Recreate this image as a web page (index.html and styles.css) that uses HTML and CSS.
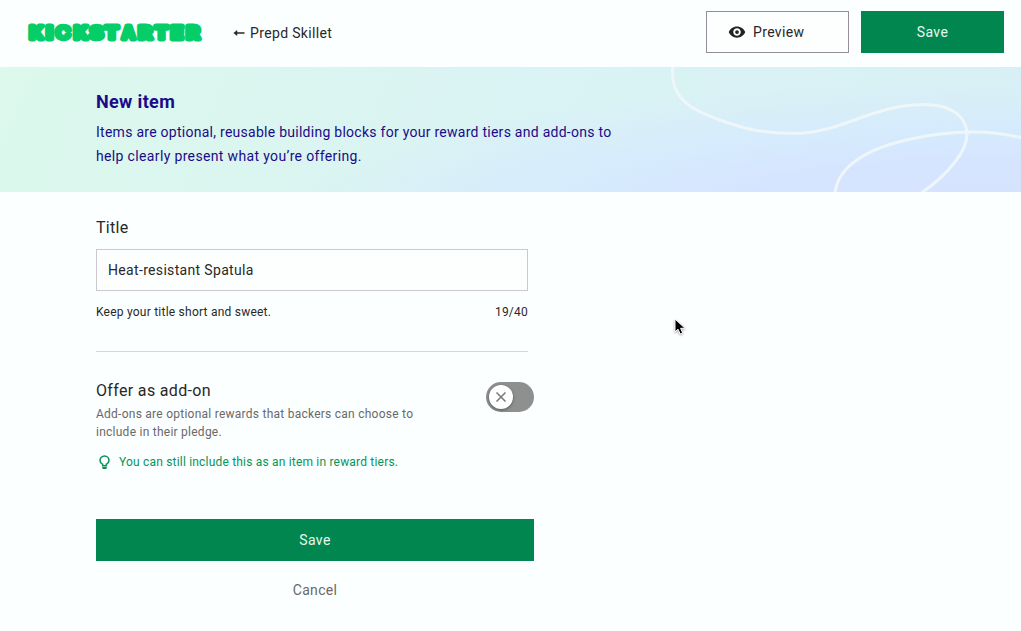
FILE: index.html
```html
<!DOCTYPE html>
<html lang="en">
<head>
<meta charset="utf-8">
<title>New item</title>
<link rel="stylesheet" href="styles.css">
</head>
<body>
<header class="header">
  <svg class="logo" viewBox="0 0 176 20" role="img" aria-label="Kickstarter">
    <g class="logo-letters">
      <text x="2.500" y="16.500" textLength="13.500" lengthAdjust="spacingAndGlyphs">K</text>
      <text x="19.500" y="16.500" textLength="6" lengthAdjust="spacingAndGlyphs">I</text>
      <text class="logo-open" x="28.500" y="16.500" textLength="15" lengthAdjust="spacingAndGlyphs">C</text>
      <text x="47" y="16.500" textLength="13.500" lengthAdjust="spacingAndGlyphs">K</text>
      <text class="logo-open" x="62.500" y="16.500" textLength="14" lengthAdjust="spacingAndGlyphs">S</text>
      <text x="78" y="16.500" textLength="13.500" lengthAdjust="spacingAndGlyphs">T</text>
      <text x="95" y="16.500" textLength="13" lengthAdjust="spacingAndGlyphs">A</text>
      <text x="111.500" y="16.500" textLength="13.500" lengthAdjust="spacingAndGlyphs">R</text>
      <text x="128" y="16.500" textLength="13" lengthAdjust="spacingAndGlyphs">T</text>
      <text x="144" y="16.500" textLength="12" lengthAdjust="spacingAndGlyphs">E</text>
      <text x="159.500" y="16.500" textLength="13" lengthAdjust="spacingAndGlyphs">R</text>
    </g>
  </svg>
  <a class="back">
    <svg class="back-arrow" viewBox="0 0 12 8"><path d="M11.500 4H2" /><path class="arrow-head" d="M4 1.600v4.800L.8 4z"/></svg>
    <span>Prepd Skillet</span>
  </a>
  <div class="actions">
    <button class="button button-outline">
      <svg class="eye" viewBox="0 0 24 24"><path d="M12 4.500C7 4.500 2.730 7.610 1 12c1.730 4.390 6 7.500 11 7.500s9.270-3.110 11-7.500c-1.730-4.390-6-7.500-11-7.500zM12 17c-2.760 0-5-2.240-5-5s2.240-5 5-5 5 2.240 5 5-2.240 5-5 5zm0-7.500a2.500 2.500 0 1 0 0 5 2.500 2.500 0 0 0 0-5z"/></svg>
      <span>Preview</span>
    </button>
    <button class="button button-solid">Save</button>
  </div>
</header>

<section class="banner">
  <div class="banner-copy">
    <h1 class="banner-title">New item</h1>
    <p class="banner-text">Items are optional, reusable building blocks for your reward tiers and add-ons to<br><span class="banner-line">help clearly present what you’re offering.</span></p>
  </div>
  <svg class="squiggle" viewBox="0 0 381 125">
    <path d="M33 -2C31 14 34 27 50 39C65 49 84 55 105 61C125 66 144 67 164 66C200 63 225 45 261 39.500C293 34.500 312 39 322 52C331 65 327 80 315 95C305 108 296 116 280 127"/>
    <path d="M195 127C196 112 206 99 223 89C243 77 270 71 300 67C328 63.500 350 64 383 71"/>
  </svg>
</section>

<main class="form">
  <label class="label" for="title">Title</label>
  <input class="input" id="title" type="text" value="Heat-resistant Spatula">
  <div class="hint-row"><span>Keep your title short and sweet.</span><span>19/40</span></div>
  <div class="divider"></div>
  <div class="addon">
    <div>
      <h2 class="addon-title">Offer as add-on</h2>
      <p class="addon-text">Add-ons are optional rewards that backers can choose to<br>include in their pledge.</p>
    </div>
    <div class="toggle" role="switch" aria-checked="false">
      <span class="knob"><svg class="cross" viewBox="0 0 10 10"><path d="M.5.5l9 9M9.500.5l-9 9"/></svg></span>
    </div>
  </div>
  <p class="tip">
    <svg class="bulb" viewBox="0 0 12 16"><path class="bulb-glass" d="M4 11.500V10C2 8.900 1.100 7.600 1.100 5.800a4.900 4.900 0 0 1 9.800 0C10.900 7.600 10 8.900 8 10v1.500z"/><path class="bulb-base" d="M3.500 13h5v.7c0 .8-.7 1.500-1.500 1.500H5c-.8 0-1.500-.7-1.500-1.500z"/></svg>
    <span>You can still include this as an item in reward tiers.</span>
  </p>
  <button class="button button-solid button-wide">Save</button>
  <a class="cancel">Cancel</a>
</main>

<svg class="pointer" viewBox="0 0 12 18"><path d="M1 1v13l3-2.800 2.200 4.800 2.500-1.100L6.600 10.300H11z"/></svg>
</body>
</html>
```
FILE: styles.css
```css
* { box-sizing: border-box; }

body {
  margin: 0;
  height: 631px;
  overflow: hidden;
  background: #fcffff;
  color: #282828;
  font-family: Roboto, "Liberation Sans", sans-serif;
  font-size: 14px;
}

h1, h2, p { margin: 0; font-weight: 400; }

.header {
  display: flex;
  align-items: center;
  height: 67px;
  padding: 0 17px 3px 27px;
}

.logo { width: 176px; height: 20px; overflow: visible; }

.logo-letters {
  font-family: Inter, sans-serif;
  font-size: 17.500px;
  font-weight: 700;
  fill: #05ce68;
  stroke: #05ce68;
  stroke-width: 5px;
  stroke-linejoin: round;
}

.logo-open { font-weight: 600; stroke-width: 4.400px; }

.back {
  display: flex;
  align-items: center;
  gap: 5px;
  margin: 2px 0 0 30px;
  letter-spacing: .35px;
}

.back-arrow { width: 12px; height: 8px; fill: none; stroke: #282828; stroke-width: 1.500px; }
.arrow-head { fill: #282828; stroke-width: .6px; }

.actions { display: flex; gap: 12px; margin-left: auto; }

.button {
  display: flex;
  align-items: center;
  justify-content: center;
  width: 143px;
  height: 42px;
  padding: 0;
  border: 0;
  font: inherit;
  letter-spacing: .35px;
}

.button-outline {
  justify-content: flex-start;
  gap: 7px;
  padding-left: 21px;
  border: 1px solid #949098;
  background: #fdffff;
  color: #282828;
}

.button-solid { background: #028650; color: #e6f8ef; }

.eye { width: 18px; height: 18px; fill: #222; }

.banner {
  display: flex;
  justify-content: space-between;
  height: 125px;
  padding-left: 96px;
  background:
    radial-gradient(ellipse 700px 130px at 990px 145px, #d5e3ff 0%, #d5e4ff 36%, #d5e9ffcc 62%, #d5e9ff00 100%),
    linear-gradient(110deg, #dcf9ec 0%, #dbf6ef 22%, #daf3f4 48%, #d8f0f5 100%);
  color: #1b0b88;
}

.banner-title { margin-top: 24px; font-size: 18px; line-height: 22px; font-weight: 700; letter-spacing: .35px; }
.banner-text { margin-top: 7px; line-height: 24px; letter-spacing: .265px; white-space: nowrap; }
.banner-line { letter-spacing: .35px; }
.squiggle { width: 381px; height: 125px; fill: none; stroke: #eff6fa; stroke-width: 3px; }

.form { display: flex; flex-direction: column; width: 438px; margin-left: 96px; }

.label { margin-top: 25px; font-size: 16px; line-height: 22px; letter-spacing: .3px; }

.input {
  width: 432px;
  height: 42px;
  margin-top: 10px;
  padding: 0 11px;
  border: 1px solid #cdc8d0;
  background: #fdffff;
  color: #282828;
  font: inherit;
  letter-spacing: .33px;
}

.hint-row {
  display: flex;
  justify-content: space-between;
  width: 432px;
  margin-top: 12px;
  font-size: 12px;
  line-height: 18px;
  letter-spacing: .23px;
}

.divider { width: 432px; height: 1px; margin-top: 30px; background: #d5d8d8; }

.addon { display: flex; justify-content: space-between; margin-top: 28px; }
.addon-title { font-size: 16px; line-height: 22px; letter-spacing: .34px; }
.addon-text { margin-top: 3px; color: #696969; font-size: 12px; line-height: 18px; letter-spacing: .25px; }

.toggle {
  display: flex;
  width: 48px;
  height: 30px;
  margin-top: 2px;
  padding: 3px;
  border-radius: 15px;
  background: #8d908f;
}

.knob {
  display: grid;
  place-items: center;
  width: 24px;
  height: 24px;
  border-radius: 50%;
  background: #fff;
  box-shadow: 0 1px 3px #0006;
}

.cross { width: 10px; height: 10px; fill: none; stroke: #777; stroke-width: 1.500px; }

.tip {
  display: flex;
  align-items: center;
  gap: 9px;
  margin-top: 12px;
  padding-left: 3px;
  color: #069457;
  font-size: 12px;
  line-height: 18px;
  letter-spacing: .19px;
}

.bulb { width: 11px; height: 15px; }
.bulb-glass { fill: none; stroke: #069457; stroke-width: 1.700px; }
.bulb-base { fill: #069457; }

.button-wide { width: 438px; margin-top: 48px; }
.cancel { margin-top: 19px; color: #696969; line-height: 20px; letter-spacing: .3px; text-align: center; }

/* The pointer floats over the page. */
.pointer {
  position: absolute;
  left: 674px;
  top: 318px;
  width: 12px;
  height: 18px;
  fill: #000;
  stroke: #fff;
  stroke-width: 1px;
  filter: drop-shadow(0 1px 1px #0005);
}
```
